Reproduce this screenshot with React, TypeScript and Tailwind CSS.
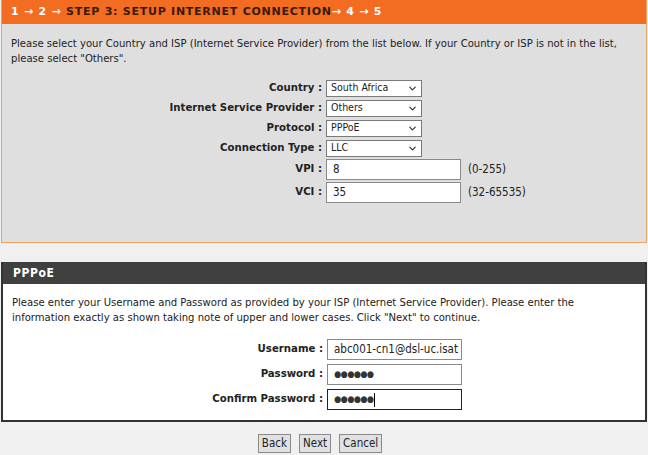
import { ChevronDown } from 'lucide-react';

const font = { fontFamily: '"DejaVu Sans Condensed", "DejaVu Sans", sans-serif' };

const Select = ({ value }: { value: string }) => (
  <div className="flex items-center justify-between w-[96px] h-[17px] bg-white border border-[#7a7a7a] pl-[4px] pr-[3px] text-[10.5px] text-[#222]">
    <span>{value}</span>
    <ChevronDown className="w-[11px] h-[11px] text-[#333]" strokeWidth={2.5} />
  </div>
);

const Field = ({ value, focused, dots }: { value?: string; focused?: boolean; dots?: number }) => (
  <div
    className={`flex items-center w-[135px] h-[21px] bg-white pl-[6px] text-[11.5px] text-[#222] overflow-hidden whitespace-nowrap ${
      focused ? 'border border-[#222]' : 'border border-[#8a8a8a]'
    }`}
  >
    {value}
    {dots && <span className="tracking-[-0.5px] text-[9px] text-[#333]">{'●'.repeat(dots)}</span>}
    {focused && <span className="ml-[1px] w-px h-[14px] bg-black" />}
  </div>
);

const Row = ({ label, children, h }: { label: string; children: React.ReactNode; h: string }) => (
  <div className={`flex items-center ${h}`}>
    <div className="w-[324px] text-right pr-[4px] font-bold text-[11.3px] text-[#222]">{label} :</div>
    {children}
  </div>
);

export default function App() {
  return (
    <div className="w-[648px] h-[455px] bg-[#f0f0f0] overflow-hidden" style={font}>
      <div className="mx-[1px] h-[243px] bg-[#dfdfdf] border border-[#f0a060] border-t-0">
        <div className="h-[24px] bg-[#f26c22] flex items-center pl-[9px] font-bold text-[11px] tracking-[0.75px] text-white" style={{ fontFamily: '"DejaVu Sans", sans-serif' }}>
          <span>1 → 2 →&nbsp;</span>
          <span className="text-[#3a1a08]">STEP 3: SETUP INTERNET CONNECTION</span>
          <span>→ 4 → 5</span>
        </div>
        <p className="w-[628px] pl-[9px] pt-[12px] text-[11.2px] leading-[15px] text-[#222]">
          Please select your Country and ISP (Internet Service Provider) from the list below. If your Country or ISP is not in the list, please select "Others".
        </p>
        <div className="mt-[12px] flex flex-col">
          <Row label="Country" h="h-[20px]"><Select value="South Africa" /></Row>
          <Row label="Internet Service Provider" h="h-[20px]"><Select value="Others" /></Row>
          <Row label="Protocol" h="h-[20px]"><Select value="PPPoE" /></Row>
          <Row label="Connection Type" h="h-[20px]"><Select value="LLC" /></Row>
          <Row label="VPI" h="h-[23px]">
            <Field value="8" />
            <span className="ml-[7px] text-[11.5px] text-[#222]">(0-255)</span>
          </Row>
          <Row label="VCI" h="h-[23px]">
            <Field value="35" />
            <span className="ml-[7px] text-[11.5px] text-[#222]">(32-65535)</span>
          </Row>
        </div>
      </div>
      <div className="mt-[19px] mx-[1px] border-2 border-[#333] border-t-0 h-[160px] bg-white">
        <div className="h-[22px] bg-[#404040] flex items-center pl-[10px] font-bold text-[12px] tracking-[0.6px] text-white">PPPoE</div>
        <p className="w-[610px] pl-[9px] pt-[11px] text-[11.2px] leading-[15px] text-[#222]">
          Please enter your Username and Password as provided by your ISP (Internet Service Provider). Please enter the information exactly as shown taking note of upper and lower cases. Click "Next" to continue.
        </p>
        <div className="mt-[12px] flex flex-col">
          <Row label="Username" h="h-[25px]"><Field value="abc001-cn1@dsl-uc.isat" /></Row>
          <Row label="Password" h="h-[25px]"><Field dots={6} /></Row>
          <Row label="Confirm Password" h="h-[25px]"><Field dots={6} focused /></Row>
        </div>
      </div>
      <div className="mt-[12px] flex justify-center gap-[8px] pr-[8px]">
        {['Back', 'Next', 'Cancel'].map((b) => (
          <button key={b} className="h-[19px] px-[3px] bg-[#e1e1e1] border border-[#8a8a8a] text-[11.5px] text-[#222] leading-none">
            {b}
          </button>
        ))}
      </div>
    </div>
  );
}
